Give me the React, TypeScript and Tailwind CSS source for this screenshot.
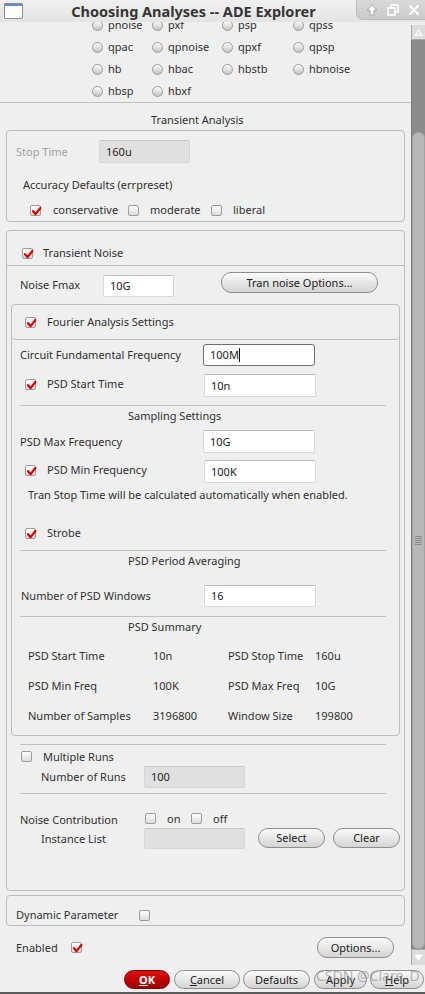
import React from 'react';

const Check = ({ on = false }: { on?: boolean }) => (
  <span className="relative inline-block w-[11px] h-[11px] shrink-0 rounded-[2px] border border-[#9c9c9c] bg-linear-to-b from-[#ffffff] to-[#dcdcdc]">
    {on && (
      <svg viewBox="0 0 11 11" className="absolute left-[0px] top-[0px] w-[11px] h-[11px]">
        <path d="M2 5.2 L4.6 8.2 L9.4 2" fill="none" stroke="#d40000" strokeWidth="2.2" strokeLinecap="round" strokeLinejoin="round" />
      </svg>
    )}
  </span>
);

const Radio = () => (
  <span className="inline-block w-[11px] h-[11px] shrink-0 rounded-full border border-[#9a9a9a] bg-linear-to-b from-[#ffffff] to-[#c4c4c4]" />
);

const Field = ({
  value,
  w,
  h = 'h-[22px]',
  kind = 'normal',
}: {
  value?: string;
  w: string;
  h?: string;
  kind?: 'normal' | 'focus' | 'disabled';
}) => {
  const look =
    kind === 'focus'
      ? 'bg-white border border-[#6e6e6e] rounded-[3px]'
      : kind === 'disabled'
      ? 'bg-[#e0e0e0] border border-[#d6d6d6] border-t-[#c8c8c8] rounded-[2px]'
      : 'bg-white border border-[#d8d8d8] border-t-[#bdbdbd] rounded-[2px]';
  return (
    <div className={`${w} ${h} ${look} flex items-center pl-[6px] shrink-0`}>
      <span className="text-[#222]">{value}</span>
      {kind === 'focus' && <span className="w-px h-[14px] bg-[#111]" />}
    </div>
  );
};

const Pill = ({ label, w, h = 'h-[21px]' }: { label: React.ReactNode; w: string; h?: string }) => (
  <div
    className={`${w} ${h} shrink-0 rounded-[10px] border border-[#8e8e8e] bg-linear-to-b from-[#fbfbfb] to-[#d4d4d4] flex items-center justify-center text-[#222]`}
  >
    {label}
  </div>
);

const Rule = ({ className = '' }: { className?: string }) => <div className={`h-px bg-[#c2c2c2] ${className}`} />;

const radios = [
  ['pnoise', 'pxf', 'psp', 'qpss'],
  ['qpac', 'qpnoise', 'qpxf', 'qpsp'],
  ['hb', 'hbac', 'hbstb', 'hbnoise'],
  ['hbsp', 'hbxf'],
];

const summary = [
  ['PSD Start Time', '10n', 'PSD Stop Time', '160u'],
  ['PSD Min Freq', '100K', 'PSD Max Freq', '10G'],
  ['Number of Samples', '3196800', 'Window Size', '199800'],
];

const TitleBar = () => (
  <div className="h-[22px] shrink-0 flex items-center bg-linear-to-b from-[#f0f0f0] to-[#e4e4e4] relative">
    <div className="ml-[4px] w-[19px] h-[16px] border border-[#8c8c8c] bg-white rounded-[1px] flex flex-col">
      <div className="h-[2px] bg-[#5d8fd4]" />
    </div>
    <div className="flex-1 text-center pr-[61px] font-bold text-[14.5px] text-[#353535]">Choosing Analyses -- ADE Explorer</div>
    <div className="absolute right-0 top-0 w-[69px] h-[20px] bg-linear-to-b from-[#d9d9d9] to-[#cbcbcb] rounded-bl-[7px] border-l border-b border-[#bdbdbd] flex items-center justify-around pl-[4px]">
      <svg viewBox="0 0 12 12" className="w-[12px] h-[12px]">
        <path d="M6 1 L11 6 L8 6 L8 11 L4 11 L4 6 L1 6 Z" fill="#ffffff" stroke="#9a9a9a" strokeWidth="0.8" />
      </svg>
      <svg viewBox="0 0 12 12" className="w-[12px] h-[12px]">
        <rect x="4" y="1" width="7" height="7" fill="none" stroke="#ffffff" strokeWidth="1.6" />
        <rect x="1" y="4" width="7" height="7" fill="#cfcfcf" stroke="#ffffff" strokeWidth="1.6" />
      </svg>
      <svg viewBox="0 0 12 12" className="w-[12px] h-[12px]">
        <path d="M2 2 L10 10 M10 2 L2 10" stroke="#ffffff" strokeWidth="2.2" strokeLinecap="round" />
      </svg>
    </div>
  </div>
);

const ScrollBar = () => (
  <div className="w-[14px] shrink-0 flex flex-col pt-[3px]">
    <div className="h-[15px] bg-[#dcdcdc] border-l border-b border-[#a8a8a8] flex items-center justify-center">
      <svg viewBox="0 0 10 8" className="w-[9px] h-[7px]">
        <path d="M1 7 L5 1 L9 7 Z" fill="none" stroke="#ffffff" strokeWidth="1.2" />
      </svg>
    </div>
    <div className="flex-1 flex flex-col bg-[#8c8c8c] border-l border-[#7a7a7a]">
      <div className="h-[92px]" />
      <div className="flex-1 rounded-[6px] bg-[#b8b8b8] border border-[#a2a2a2] flex flex-col items-center justify-center gap-[1px]">
        <div className="w-[7px] h-px bg-[#8a8a8a]" />
        <div className="w-[7px] h-px bg-[#8a8a8a]" />
        <div className="w-[7px] h-px bg-[#8a8a8a]" />
        <div className="w-[7px] h-px bg-[#8a8a8a]" />
        <div className="w-[7px] h-px bg-[#8a8a8a]" />
      </div>
    </div>
    <div className="h-[16px] bg-[#dcdcdc] border-l border-t border-[#a8a8a8] flex items-center justify-center">
      <svg viewBox="0 0 10 8" className="w-[9px] h-[7px]">
        <path d="M1 1 L5 7 L9 1 Z" fill="#ffffff" stroke="#ffffff" strokeWidth="1" />
      </svg>
    </div>
  </div>
);

export default function App() {
  return (
    <div className="w-[425px] h-[994px] overflow-hidden flex flex-col bg-[#efefef] text-[11px] leading-[14px] text-[#303030] font-['Noto_Sans','DejaVu_Sans',sans-serif]">
      <TitleBar />

      <div className="flex flex-1 min-h-0">
        <div className="flex-1 overflow-hidden">
          {/* analyses radio grid, scrolled so that the first row is cut */}
          <div className="-mt-[8px]">
            {radios.map((row, i) => (
              <div key={i} className="h-[22px] pl-[92px] grid grid-cols-[60px_70px_71px_auto] items-center">
                {row.map((r) => (
                  <div key={r} className="flex items-center gap-[5px]">
                    <Radio />
                    <span>{r}</span>
                  </div>
                ))}
              </div>
            ))}
          </div>
          <Rule />

          <div className="h-[27px] pt-[10px] pl-[151px]">Transient Analysis</div>

          {/* Transient Analysis group */}
          <div className="ml-[6px] w-[399px] rounded-[4px] border border-[#bcbcbc] pb-[1px]">
            <div className="mt-[9px] h-[23px] flex items-center pl-[9px]">
              <span className="w-[83px] text-[#a2a2a2]">Stop Time</span>
              <Field value="160u" w="w-[91px]" h="h-[23px]" kind="disabled" />
            </div>
            <div className="mt-[12px] h-[20px] flex items-center pl-[16px]">Accuracy Defaults (errpreset)</div>
            <div className="mt-[5px] h-[20px] flex items-center pl-[23px]">
              <div className="w-[98px] flex items-center gap-[12px]">
                <Check on />
                <span>conservative</span>
              </div>
              <div className="w-[83px] flex items-center gap-[11px]">
                <Check />
                <span>moderate</span>
              </div>
              <div className="flex items-center gap-[11px]">
                <Check />
                <span>liberal</span>
              </div>
            </div>
          </div>

          {/* Transient Noise group */}
          <div className="mt-[8px] ml-[6px] w-[399px] rounded-[4px] border border-[#bcbcbc] pb-[41px]">
            <div className="pt-[12px] pb-[2px] border-b border-[#bcbcbc]">
              <div className="h-[20px] flex items-center pl-[15px] gap-[10px]">
                <Check on />
                <span>Transient Noise</span>
              </div>
            </div>

            <div className="mt-[6px] h-[26px] flex items-start pl-[13px]">
              <span className="w-[83px] self-center">Noise Fmax</span>
              <div className="mt-[3px]">
                <Field value="10G" w="w-[71px]" />
              </div>
              <div className="ml-[47px]">
                <Pill label="Tran noise Options..." w="w-[157px]" />
              </div>
            </div>

            {/* Fourier Analysis group */}
            <div className="mt-[6px] mx-[4px] rounded-[4px] border border-[#bcbcbc] pb-[4px]">
              <div className="pt-[7px] pb-[7px] border-b border-[#bcbcbc] rounded-b-[4px]">
                <div className="h-[20px] flex items-center pl-[13px] gap-[11px]">
                  <Check on />
                  <span>Fourier Analysis Settings</span>
                </div>
              </div>

              <div className="mt-[4px] h-[22px] flex items-center pl-[8px]">
                <span className="w-[183px]">Circuit Fundamental Frequency</span>
                <Field value="100M" w="w-[112px]" kind="focus" />
              </div>
              <div className="mt-[8px] h-[23px] flex items-center pl-[13px]">
                <div className="w-[179px] flex items-center gap-[11px] self-start pt-[3px]">
                  <Check on />
                  <span>PSD Start Time</span>
                </div>
                <Field value="10n" w="w-[112px]" h="h-[23px]" />
              </div>

              <Rule className="mt-[8px] ml-[8px] w-[366px]" />
              <div className="h-[19px] flex items-center pl-[116px]">Sampling Settings</div>

              <div className="mt-[5px] h-[23px] flex items-center pl-[8px]">
                <span className="w-[183px]">PSD Max Frequency</span>
                <Field value="10G" w="w-[112px]" h="h-[23px]" />
              </div>
              <div className="mt-[7px] h-[23px] flex items-center pl-[13px]">
                <div className="w-[179px] flex items-center gap-[11px] self-start pt-[3px]">
                  <Check on />
                  <span>PSD Min Frequency</span>
                </div>
                <Field value="100K" w="w-[112px]" h="h-[23px]" />
              </div>
              <div className="mt-[3px] h-[18px] flex items-center pl-[16px]">
                Tran Stop Time will be calculated automatically when enabled.
              </div>

              <div className="mt-[19px] h-[20px] flex items-center pl-[13px] gap-[11px]">
                <Check on />
                <span>Strobe</span>
              </div>

              <Rule className="mt-[7px] ml-[8px] w-[366px]" />
              <div className="h-[19px] flex items-center pl-[116px]">PSD Period Averaging</div>

              <div className="mt-[15px] h-[22px] flex items-center pl-[9px]">
                <span className="w-[183px]">Number of PSD Windows</span>
                <Field value="16" w="w-[112px]" />
              </div>

              <Rule className="mt-[9px] ml-[8px] w-[366px]" />
              <div className="h-[19px] flex items-center pl-[116px]">PSD Summary</div>

              <div className="mt-[5px] pl-[16px] grid grid-cols-[125px_75px_87px_auto]">
                {summary.map((row) =>
                  row.map((cell, j) => (
                    <div key={row[0] + j} className="h-[30px] flex items-center">
                      {cell}
                    </div>
                  ))
                )}
              </div>
            </div>

            <Rule className="mt-[8px] ml-[13px] w-[366px]" />

            <div className="mt-[2px] h-[19px] flex items-center pl-[14px] gap-[11px]">
              <Check />
              <span>Multiple Runs</span>
            </div>
            <div className="h-[22px] flex items-center pl-[34px]">
              <span className="w-[103px]">Number of Runs</span>
              <Field value="100" w="w-[101px]" kind="disabled" />
            </div>

            <Rule className="mt-[5px] ml-[13px] w-[366px]" />

            <div className="mt-[15px] h-[19px] flex items-center pl-[13px]">
              <span className="w-[125px] pt-[3px]">Noise Contribution</span>
              <div className="w-[46px] flex items-center gap-[11px]">
                <Check />
                <span>on</span>
              </div>
              <div className="flex items-center gap-[11px]">
                <Check />
                <span>off</span>
              </div>
            </div>
            <div className="h-[21px] flex items-start pl-[34px]">
              <span className="w-[103px] self-center">Instance List</span>
              <Field w="w-[101px]" h="h-[21px]" kind="disabled" />
              <div className="ml-[13px]">
                <Pill label="Select" w="w-[67px]" h="h-[20px]" />
              </div>
              <div className="ml-[8px]">
                <Pill label="Clear" w="w-[67px]" h="h-[20px]" />
              </div>
            </div>
          </div>

          {/* Dynamic Parameter group */}
          <div className="mt-[4px] ml-[6px] w-[399px] rounded-[4px] border border-[#bcbcbc]">
            <div className="mt-[9px] h-[20px] flex items-center pl-[9px]">
              <span className="w-[123px]">Dynamic Parameter</span>
              <Check />
            </div>
          </div>

          <div className="mt-[11px] h-[21px] flex items-center pl-[16px] pr-[17px]">
            <span className="w-[55px]">Enabled</span>
            <Check on />
            <div className="ml-auto">
              <Pill label="Options..." w="w-[77px]" />
            </div>
          </div>
        </div>

        <ScrollBar />
      </div>

      {/* dialog buttons */}
      <div className="h-[29px] shrink-0 relative border-b-[2px] border-[#5a5a5a]">
        <div className="pt-[5px] pl-[124px] flex">
          <div className="w-[46px] h-[19px] rounded-[10px] border border-[#7a0000] bg-linear-to-b from-[#e01010] to-[#a00000] flex items-center justify-center text-white font-bold">
            <span className="underline">O</span>K
          </div>
          <div className="ml-[4px]">
            <Pill label={<span><span className="underline">C</span>ancel</span>} w="w-[66px]" h="h-[19px]" />
          </div>
          <div className="ml-[3px]">
            <Pill label="Defaults" w="w-[67px]" h="h-[19px]" />
          </div>
          <div className="ml-[4px]">
            <Pill label="Apply" w="w-[53px]" h="h-[19px]" />
          </div>
          <div className="ml-[3px]">
            <Pill label={<span><span className="underline">H</span>elp</span>} w="w-[54px]" h="h-[19px]" />
          </div>
        </div>
        <div className="absolute left-[316px] top-[4px] text-[14px] text-[#8a8a8a] opacity-60 pointer-events-none">CSDN @Clare_D</div>
      </div>
    </div>
  );
}
